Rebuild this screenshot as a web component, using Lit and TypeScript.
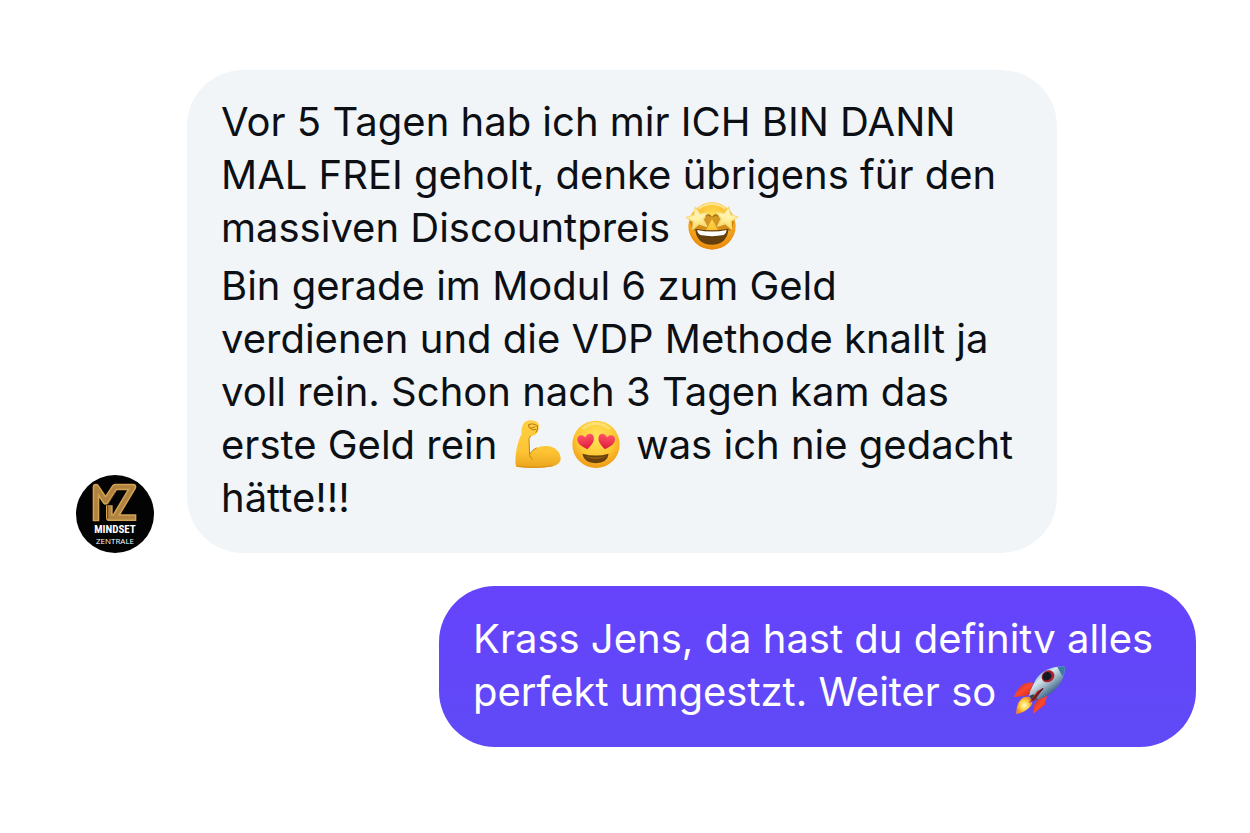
import { LitElement, html, css, svg } from "lit";
import { customElement } from "lit/decorators.js";

const star = (x: number, y: number, turn: number) => svg`
  <path transform="translate(${x} ${y}) rotate(${turn})"
    d="M0-33 9-11 33-9 15 7 21 30 0 18-21 30-15 7-33-9-9-11Z"
    fill="url(#starFill)" stroke="#f8dc7c" stroke-width="4" stroke-linejoin="round"/>`;

const heart = (x: number, y: number, turn: number) => svg`
  <path transform="translate(${x} ${y}) rotate(${turn})"
    d="M0 24C-14 14-26 4-25-9-24-22-8-25 0-12 8-25 24-22 25-9 26 4 14 14 0 24Z"
    fill="url(#heartFill)"/>`;

const starStruck = html`<svg class="emoji wide" viewBox="24 18 162 156" role="img" aria-label="🤩">
    <defs>
      <radialGradient id="faceA" cx=".5" cy=".3" r=".7">
        <stop offset="0" stop-color="#ffdf55"/><stop offset=".55" stop-color="#fbb726"/><stop offset="1" stop-color="#e8860c"/>
      </radialGradient>
      <linearGradient id="starFill" x1="0" y1="0" x2="0" y2="1">
        <stop offset="0" stop-color="#fff8cc"/><stop offset=".6" stop-color="#fff0a2"/><stop offset="1" stop-color="#fbd956"/>
      </linearGradient>
    </defs>
    <circle cx="105" cy="96" r="71" fill="url(#faceA)"/>
    <path d="M67 42Q105 18 143 42" fill="none" stroke="#fff0a8" stroke-width="8" stroke-linecap="round" opacity=".7"/>
    <path d="M38 84 48 110 84 114 98 88 105 76 112 88 126 114 162 110 172 84 151 66 105 66 60 66Z" fill="#b5700a" opacity=".6"/>
    <path d="M55 104Q105 114 154 104C154 135 133 152 105 152 76 152 55 135 55 104Z" fill="#65400f"/>
    <path d="M60 108Q105 117 149 108 148 118 140 123 105 130 70 123 61 118 60 108Z" fill="#fff"/>
    ${star(62, 72, -12)}${star(149, 71, 12)}
    <path d="M88 66Q94 60 101 67M122 66Q116 60 109 67" fill="none" stroke="#a86f12" stroke-width="4" stroke-linecap="round"/>
  </svg>`;

const muscle = html`<svg class="emoji" viewBox="25 20 150 150" role="img" aria-label="💪">
    <defs>
      <linearGradient id="armFill" x1="0" y1="0" x2="0" y2="1">
        <stop offset="0" stop-color="#ffd044"/><stop offset=".65" stop-color="#fdc434"/><stop offset="1" stop-color="#eba51d"/>
      </linearGradient>
    </defs>
    <path d="M56 34C61 24 78 21 91 26 101 29 105 38 102 48 101 62 92 71 78 71L73 78 76 124C86 109 104 100 126 101 148 102 167 116 168 138 169 154 151 163 130 164 99 168 60 168 34 163 28 139 38 87 51 65 49 51 52 43 56 34Z" fill="url(#armFill)"/>
    <path d="M78 71 73 79 75 129Q78 137 83 141M76 124Q83 112 95 107" fill="none" stroke="#c78512" stroke-width="3" stroke-linecap="round"/>
    <path d="M71 38Q82 30 98 40M72 38Q70 48 79 48L91 43M77 48Q83 57 94 51M98 41Q102 51 94 60" fill="none" stroke="#b97810" stroke-width="3" stroke-linecap="round"/>
    <path d="M37 161Q100 169 144 160" fill="none" stroke="#d99116" stroke-width="3"/>
  </svg>`;

const heartEyes = html`<svg class="emoji" viewBox="196 20 150 150" role="img" aria-label="😍">
    <defs>
      <radialGradient id="faceB" cx=".5" cy=".35" r=".67">
        <stop offset="0" stop-color="#ffe45c"/><stop offset=".6" stop-color="#fec833"/><stop offset="1" stop-color="#ee9512"/>
      </radialGradient>
      <linearGradient id="heartFill" x1="0" y1="0" x2="0" y2="1">
        <stop offset="0" stop-color="#ff5467"/><stop offset="1" stop-color="#dd1939"/>
      </linearGradient>
    </defs>
    <circle cx="271" cy="96" r="71" fill="url(#faceB)"/>
    <path d="M232 48Q271 18 310 48" fill="none" stroke="#fff1a0" stroke-width="8" stroke-linecap="round" opacity=".55"/>
    ${heart(241, 87, -10)}${heart(302, 87, 10)}
    <path d="M230 124Q271 135 309 124 306 151 270 153 235 151 230 124Z" fill="#68410d"/>
    <path d="M239 131Q271 139 301 131 293 139 270 140 247 139 239 131Z" fill="#8e5b12"/>
  </svg>`;

const rocket = html`<svg class="emoji wide" viewBox="27 24 162 156" role="img" aria-label="🚀">
    <defs>
      <linearGradient id="hull" x1="100" y1="45" x2="150" y2="110" gradientUnits="userSpaceOnUse">
        <stop offset="0" stop-color="#5b9bc2"/><stop offset=".35" stop-color="#d5e9ee"/><stop offset=".6" stop-color="#a3bac8"/><stop offset="1" stop-color="#355f88"/>
      </linearGradient>
      <linearGradient id="fin" x1="0" y1="0" x2="1" y2="1">
        <stop offset="0" stop-color="#b5222b"/><stop offset=".5" stop-color="#fa4930"/><stop offset="1" stop-color="#d41b20"/>
      </linearGradient>
      <radialGradient id="flame"><stop offset="0" stop-color="#fffbd0"/><stop offset=".5" stop-color="#ffd84b"/><stop offset="1" stop-color="#f38b22"/></radialGradient>
    </defs>
    <path d="M90 80C67 77 47 87 33 123L66 120 84 113Z" fill="url(#fin)"/>
    <path d="M132 119 126 146 90 174 94 146 105 130Z" fill="url(#fin)"/>
    <path d="M64 123C47 132 39 150 40 174 62 170 82 158 88 141L80 122Z" fill="url(#flame)"/>
    <path d="M186 32C158 28 119 39 99 70L82 104 78 121 91 136 111 128C139 119 167 97 179 68 184 53 187 42 186 32Z" fill="url(#hull)"/>
    <path d="M186 32Q177 29 163 33L179 62Q187 47 186 32Z" fill="#397ba8"/>
    <path d="M78 120 91 136 104 130 91 115Z" fill="#304451"/>
    <path d="M121 96 103 105 87 127 78 142 98 130Z" fill="#b9272b"/>
    <path d="M120 97 88 132" stroke="#4d1721" stroke-width="4"/>
    <ellipse cx="135" cy="61" rx="20" ry="17" fill="#a92031" transform="rotate(-35 135 61)"/>
    <ellipse cx="132" cy="61" rx="14" ry="12" fill="#101a24" transform="rotate(-35 132 61)"/>
  </svg>`;

@customElement("app-root")
export class AppRoot extends LitElement {
  static styles = css`
    :host {
      display: block;
      min-height: 100vh;
      box-sizing: border-box;
      background: #fff;
      font-family: Inter, "Liberation Sans", sans-serif;
    }
    .chat {
      display: flex;
      flex-direction: column;
      gap: 33px;
      padding: 70px 54px 70px 76px;
    }
    .message {
      display: flex;
      align-items: flex-end;
      gap: 33px;
    }
    .sent {
      justify-content: flex-end;
    }
    .bubble {
      box-sizing: border-box;
      padding: 25px 34px 29px;
      border-radius: 56px;
      font-size: 40px;
      line-height: 53px;
    }
    .received .bubble {
      flex: 0 1 870px;
      background: #f2f5f8;
      color: #0c1014;
    }
    .sent .bubble {
      flex: 0 1 757px;
      padding-top: 26px;
      background: linear-gradient(#6643fc, #5f4af6);
      color: #fff;
    }
    p {
      margin: 0;
    }
    p + p {
      margin-top: 5px;
    }
    .emoji {
      width: 50px;
      height: 50px;
      margin: -10px 4px;
      vertical-align: 0;
    }
    .wide {
      width: 54px;
      height: 52px;
    }
    .avatar {
      flex: none;
      display: flex;
      flex-direction: column;
      align-items: center;
      box-sizing: border-box;
      width: 78px;
      height: 78px;
      padding-top: 8px;
      border-radius: 50%;
      background: #030303;
      color: #fff;
    }
    .monogram {
      width: 46px;
      height: 40px;
    }
    .brand {
      font: bold 11px/13px "Liberation Sans Narrow", "Roboto Condensed", "Liberation Sans", sans-serif;
    }
    .tagline {
      font: 8px/9px "Open Sans", sans-serif;
    }
  `;

  render() {
    return html`
      <main class="chat">
        <article class="message received">
          <div class="avatar">
            <svg class="monogram" viewBox="85 53 138 120" aria-hidden="true">
              <g fill="none" stroke-linejoin="round">
                <path d="M97 168V65L126 108 154 65H208L153 157H218M137 120V157H155" stroke="#d3a354" stroke-width="20"/>
                <path d="M97 164V65L126 108 154 65H208L153 157H214M137 122V157H151" stroke="#b08340" stroke-width="11"/>
                <path d="M132 160V118L156 80" stroke="#5a421b" stroke-width="3"/>
              </g>
            </svg>
            <span class="brand">MINDSET</span>
            <span class="tagline">ZENTRALE</span>
          </div>
          <div class="bubble">
            <p>
              Vor 5 Tagen hab ich mir ICH BIN DANN<br />
              MAL FREI geholt, denke übrigens für den<br />
              massiven Discountpreis ${starStruck}
            </p>
            <p>
              Bin gerade im Modul 6 zum Geld<br />
              verdienen und die VDP Methode knallt ja<br />
              voll rein. Schon nach 3 Tagen kam das<br />
              erste Geld rein ${muscle}${heartEyes} was ich nie gedacht<br />
              hätte!!!
            </p>
          </div>
        </article>
        <article class="message sent">
          <div class="bubble">
            <p>
              Krass Jens, da hast du definitv alles<br />
              perfekt umgestzt. Weiter so ${rocket}
            </p>
          </div>
        </article>
      </main>
    `;
  }
}
